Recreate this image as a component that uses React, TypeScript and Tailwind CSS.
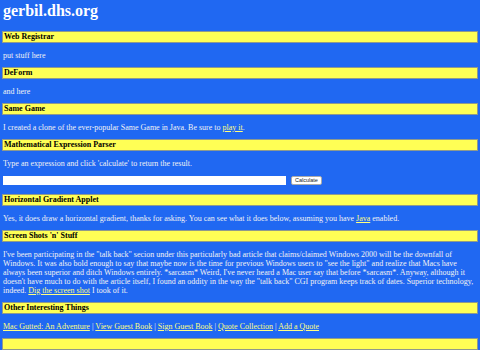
export default function App() {
  const Bar = ({ children }: { children?: React.ReactNode }) => (
    <div className="h-[12px] border border-[#8f9a8c] bg-[#ffff55] px-[1px] flex items-center text-[8px] font-bold text-black leading-none">
      {children}
    </div>
  );
  const link = "text-[#ffff80] underline";
  const para = "my-[7.5px] pl-[1px] leading-[9px]";

  return (
    <div className="min-h-[350px] bg-[#2068f2] px-[2px] text-[#f2f2f2] text-[8px] font-['Liberation_Serif',serif] overflow-hidden">
      <h1 className="pt-[2px] mb-[11px] pl-[1px] text-[16px] font-bold leading-[18px] text-white">gerbil.dhs.org</h1>

      <Bar>Web Registrar</Bar>
      <p className={para}>put stuff here</p>

      <Bar>DeForm</Bar>
      <p className={para}>and here</p>

      <Bar>Same Game</Bar>
      <p className={para}>
        I created a clone of the ever-popular Same Game in Java. Be sure to <a className={link}>play it</a>.
      </p>

      <Bar>Mathematical Expression Parser</Bar>
      <p className="mt-[7.5px] pl-[1px] leading-[9px]">Type an expression and click 'calculate' to return the result.</p>
      <div className="mt-[8.5px] mb-[9px] pl-[1px] flex items-center gap-[5px]">
        <input className="w-[283px] h-[9px] bg-white border-none outline-none" />
        <button className="h-[9px] px-[3px] bg-white rounded-[2px] border border-[#aaa] text-[5.5px] leading-none text-[#222] font-['Liberation_Sans',sans-serif]">
          Calculate
        </button>
      </div>

      <Bar>Horizontal Gradient Applet</Bar>
      <p className={para}>
        Yes, it does draw a horizontal gradient, thanks for asking. You can see what it does below, assuming you have <a className={link}>Java</a> enabled.
      </p>

      <Bar>Screen Shots 'n' Stuff</Bar>
      <p className={para}>
        I've been participating in the "talk back" secion under this particularly bad article that claims/claimed Windows 2000 will be the downfall of Windows. It was also bold enough to say that maybe now is the time for previous Windows users to "see the light" and realize that Macs have always been superior and ditch Windows entirely. *sarcasm* Weird, I've never heard a Mac user say that before *sarcasm*. Anyway, although it doesn't have much to do with the article itself, I found an oddity in the way the "talk back" CGI program keeps track of dates. Superior technology, indeed. <a className={link}>Dig the screen shot</a> I took of it.
      </p>

      <Bar>Other Interesting Things</Bar>
      <p className={para}>
        <a className={link}>Mac Gutted: An Adventure</a> | <a className={link}>View Guest Book</a> | <a className={link}>Sign Guest Book</a> | <a className={link}>Quote Collection</a> | <a className={link}>Add a Quote</a>
      </p>

      <Bar />
    </div>
  );
}
